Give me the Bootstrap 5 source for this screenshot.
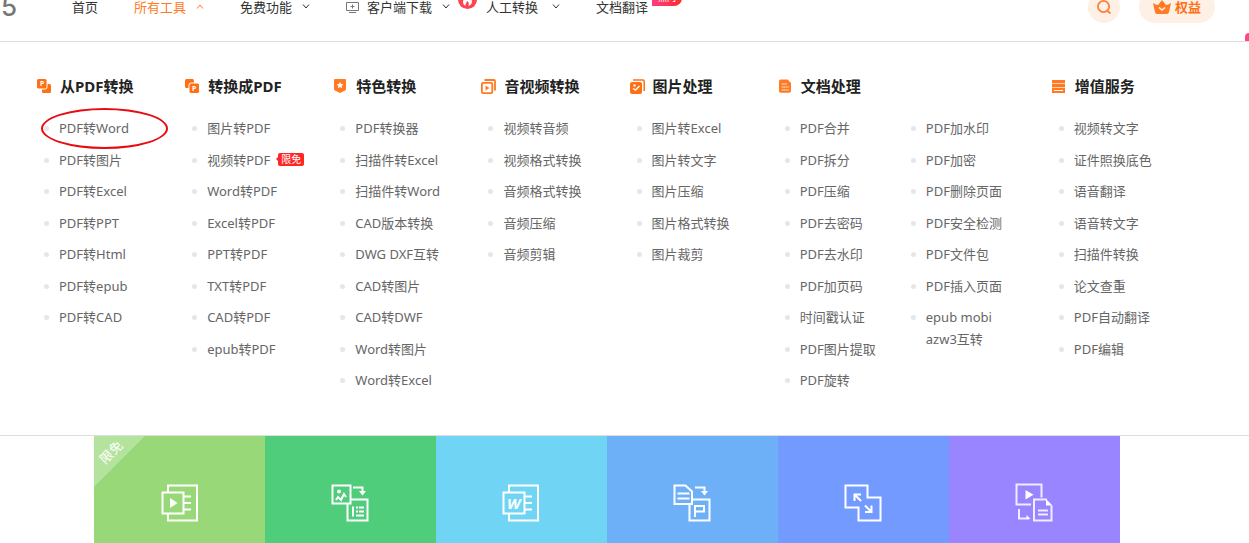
<!DOCTYPE html>
<html lang="zh-CN">
<head>
<meta charset="utf-8">
<meta name="viewport" content="width=device-width, initial-scale=1">
<title>所有工具</title>
<link rel="stylesheet" href="https://cdn.jsdelivr.net/npm/bootstrap@5.3.0/dist/css/bootstrap.min.css">
<style>
  body { font-family: "Noto Sans", "Noto Sans CJK SC", sans-serif; font-size: 13px; line-height: 22px; color: #333; }
  a { color: inherit; text-decoration: none; }
  .site-nav { height: 70px; margin-top: -28px; border-bottom: 1px solid #ddd; padding-right: 34px; }
  .brand { width: 72px; font: 500 26px/32px "Inter", sans-serif; color: #777; }
  .brand a { display: flex; justify-content: flex-end; width: 17px; overflow: hidden; }
  .nav-items { gap: 36px; }
  .nav-items svg { flex: none; }
  .caret { width: 8px; height: 5px; margin-left: 10px; fill: none; stroke: currentColor; stroke-width: 1; }
  .caret-far { margin-left: 14px; }
  .orange { color: #ff7a22; }
  .flame { left: -28px; top: -6px; }
  .hot { left: 100%; top: -6px; margin-left: 4px; padding: 0 6px; font-size: 9px; line-height: 16px; color: #fff; background: linear-gradient(90deg, #ff3d7f, #ff2b2b); border-radius: 8px 8px 8px 0; }
  .find { width: 32px; height: 32px; background: #fff0e6; }
  .vip { width: 76px; height: 32px; background: #fff0e6; color: #ff6f14; margin-left: 19px; gap: 4px; }
  .float-dot { right: 0; bottom: 0; width: 4px; height: 8px; background: #ff4785; border-radius: 4px 0 0 0; }
  .mega { padding: 33px 49px 39px 37px; border-bottom: 1px solid #ddd; display: grid; grid-template-columns: repeat(5, 4fr) 7.4fr 4fr; }
  .mega h2 { font-size: 15px; line-height: 22px; font-weight: 700; color: #222; margin-bottom: 15px; gap: 8px; }
  .mega h2 svg { width: 15px; height: 15px; flex: none; }
  .mega ul { display: grid; grid-template-rows: repeat(9, 1fr); min-height: 284px; padding-left: 22px; margin: 0; list-style: none; color: #666; }
  .mega li { position: relative; padding-top: 5px; white-space: nowrap; }
  .mega li::before { content: ""; position: absolute; left: -15px; top: 14px; width: 5px; height: 5px; border-radius: 50%; background: #e6e6e6; }
  .two-cols { display: grid; grid-template-columns: 126fr 148fr; }
  .mega .tall { grid-row: span 2; white-space: normal; }
  .ring { left: -18px; top: -4px; width: 127px; height: 41px; border: 2px solid #e80c10; border-radius: 50%; pointer-events: none; }
  .free { position: relative; margin-left: 8px; padding: 0 3px; font-size: 10px; line-height: 13px; color: #fff; background: #ff2626; border-radius: 2px; }
  .free::before { content: ""; position: absolute; left: -2px; top: 4px; border: 2px solid transparent; border-left: 0; border-right-color: #ff2626; }
  .tiles { padding: 0 129px 0 94px; }
  .tile { flex: 1 1 0; padding-top: 48px; }
  .tile svg { width: 38px; height: 38px; fill: none; stroke: #fff; stroke-width: 2; overflow: visible; }
  .tile .solid { fill: #fff; stroke: none; }
  .t1 { background: #98d878; } .t2 { background: #4fcd7a; } .t3 { background: #70d5f5; }
  .t4 { background: #6db0f8; } .t5 { background: #729aff; } .t6 { background: #9985ff; }
  .ribbon { left: 0; top: 0; width: 51px; height: 51px; background: rgba(255,255,255,.28); clip-path: polygon(0 0, 100% 0, 0 100%); color: #fff; }
  .ribbon span { position: absolute; left: 4px; top: 5px; transform: rotate(-45deg); }
</style>
</head>
<body class="min-vh-100 d-flex flex-column bg-white overflow-x-hidden">
<header class="site-nav d-flex align-items-center position-relative">
  <div class="brand flex-shrink-0"><a href="#">65</a></div>
  <nav class="nav-items d-flex align-items-center text-nowrap" aria-label="主导航">
    <a href="#">首页</a>
    <a href="#" class="orange d-flex align-items-center">所有工具<svg class="caret" viewBox="0 0 8 5"><path d="M1 4.500 4 1l3 3.500"/></svg></a>
    <a href="#" class="d-flex align-items-center">免费功能<svg class="caret" viewBox="0 0 8 5"><path d="M1 .5 4 4 7 .5"/></svg></a>
    <a href="#" class="d-flex align-items-center"><svg class="me-2" width="13" height="12" viewBox="0 0 13 12" fill="none" stroke="#777"><path d="M.5 1.500h12v8H.5zM3 11.500h7M6.500 3.500v4M4.500 5.500h4"/></svg>客户端下载<svg class="caret" viewBox="0 0 8 5"><path d="M1 .5 4 4 7 .5"/></svg></a>
    <a href="#" class="d-flex align-items-center position-relative"><svg class="flame position-absolute" width="19" height="19" viewBox="0 0 19 19"><circle cx="9.500" cy="9.500" r="9.500" fill="#ff4350"/><path d="M9 3c1 3-4 5-4 9 0 2 1 3 2.500 4-.5-2 1-3 1.500-5 2 1 2 3 1.500 5 2-1 3.500-2 3.500-4.500C14 8 10.500 7 9 3z" fill="#fff"/></svg>人工转换<svg class="caret caret-far" viewBox="0 0 8 5"><path d="M1 .5 4 4 7 .5"/></svg></a>
    <a href="#" class="position-relative">文档翻译<span class="hot position-absolute">热门</span></a>
  </nav>
  <button class="find btn p-0 border-0 rounded-circle ms-auto d-flex align-items-center justify-content-center flex-shrink-0" type="button" aria-label="搜索"><svg width="16" height="16" viewBox="0 0 16 16" fill="none" stroke="#ff7f3b" stroke-width="1.8"><circle cx="7.500" cy="7.500" r="5.600"/><path d="m11 11.500 3.500 3"/></svg></button>
  <a href="#" class="vip rounded-pill d-flex align-items-center justify-content-center fw-bold flex-shrink-0"><svg width="18" height="16" viewBox="0 0 18 16"><path d="M0 4q3 2 5 2l4-5 4 5q2 0 5-2l-2 9q-.4 2-2 2H4q-1.600 0-2-2z" fill="#ff7b24"/><path d="m6 8.500 3 2.500 3-2.500" fill="none" stroke="#fff0e6" stroke-width="1.600"/></svg>权益</a>
  <span class="float-dot position-absolute"></span>
</header>

<section class="mega">
  <div>
    <h2 class="d-flex align-items-center"><svg viewBox="0 0 15 15" fill="#ff6f14"><rect x="5" y="5" width="9" height="9" rx="1.500"/><rect x="-.5" y="-.5" width="10.500" height="10.500" rx="2" stroke="#fff"/><text x="3" y="7" font-size="7" font-weight="700" fill="#fff">P</text></svg>从PDF转换</h2>
    <ul>
      <li><a href="#">PDF转Word</a><span class="ring position-absolute"></span></li>
      <li><a href="#">PDF转图片</a></li>
      <li><a href="#">PDF转Excel</a></li>
      <li><a href="#">PDF转PPT</a></li>
      <li><a href="#">PDF转Html</a></li>
      <li><a href="#">PDF转epub</a></li>
      <li><a href="#">PDF转CAD</a></li>
    </ul>
  </div>
  <div>
    <h2 class="d-flex align-items-center"><svg viewBox="0 0 15 15" fill="#ff6f14"><rect x="0" y="0" width="9" height="9" rx="1.500"/><rect x="4" y="4" width="10.500" height="10.500" rx="2" stroke="#fff"/><text x="7" y="12" font-size="7" font-weight="700" fill="#fff">P</text></svg>转换成PDF</h2>
    <ul>
      <li><a href="#">图片转PDF</a></li>
      <li class="d-flex align-items-start"><a href="#">视频转PDF</a><span class="free mt-1">限免</span></li>
      <li><a href="#">Word转PDF</a></li>
      <li><a href="#">Excel转PDF</a></li>
      <li><a href="#">PPT转PDF</a></li>
      <li><a href="#">TXT转PDF</a></li>
      <li><a href="#">CAD转PDF</a></li>
      <li><a href="#">epub转PDF</a></li>
    </ul>
  </div>
  <div>
    <h2 class="d-flex align-items-center"><svg viewBox="0 0 15 15"><path d="M2 0h10q1 0 1 1v9q0 1-1 1.500L7 14l-5-2.500Q1 11 1 10V1q0-1 1-1z" fill="#ff7a22"/><path d="m7 2.800 1 2.200 2.400.3-1.800 1.600.5 2.400L7 8.100 4.900 9.300l.5-2.400-1.800-1.600L6 5z" fill="#fff"/></svg>特色转换</h2>
    <ul>
      <li><a href="#">PDF转换器</a></li>
      <li><a href="#">扫描件转Excel</a></li>
      <li><a href="#">扫描件转Word</a></li>
      <li><a href="#">CAD版本转换</a></li>
      <li><a href="#">DWG DXF互转</a></li>
      <li><a href="#">CAD转图片</a></li>
      <li><a href="#">CAD转DWF</a></li>
      <li><a href="#">Word转图片</a></li>
      <li><a href="#">Word转Excel</a></li>
    </ul>
  </div>
  <div>
    <h2 class="d-flex align-items-center"><svg viewBox="0 0 15 15" fill="none" stroke="#ff7a22" stroke-width="1.800"><rect x=".9" y="3.800" width="10.400" height="10.300" rx="1"/><path d="M3.500 1h9.500q1 0 1 1v9.500"/><path d="M4.500 6.500v5l4-2.500z" fill="#ff7a22" stroke="none"/></svg>音视频转换</h2>
    <ul>
      <li><a href="#">视频转音频</a></li>
      <li><a href="#">视频格式转换</a></li>
      <li><a href="#">音频格式转换</a></li>
      <li><a href="#">音频压缩</a></li>
      <li><a href="#">音频剪辑</a></li>
    </ul>
  </div>
  <div>
    <h2 class="d-flex align-items-center"><svg viewBox="0 0 15 15"><rect y="3" width="12" height="12" rx="2" fill="#ff6f14"/><path d="M3 1h10q1.200 0 1.200 1.200V12" fill="none" stroke="#ff6f14" stroke-width="1.500"/><circle cx="4.500" cy="6.500" r="1.200" fill="#fff"/><path d="m3 9.500 2.500 1.500 4-4" fill="none" stroke="#fff" stroke-width="1.400"/></svg>图片处理</h2>
    <ul>
      <li><a href="#">图片转Excel</a></li>
      <li><a href="#">图片转文字</a></li>
      <li><a href="#">图片压缩</a></li>
      <li><a href="#">图片格式转换</a></li>
      <li><a href="#">图片裁剪</a></li>
    </ul>
  </div>
  <div>
    <h2 class="d-flex align-items-center"><svg viewBox="0 0 15 15"><path d="M3 .5h6.500L13 4v8q0 1.800-2 1.800H3q-2 0-2-1.800V2.300Q1 .5 3 .5z" fill="#ff7a22"/><path d="M3.500 5H9M3.500 8H11M3.500 11H11" stroke="#ffd9bf" stroke-width="1.200"/></svg>文档处理</h2>
    <div class="two-cols">
      <ul>
        <li><a href="#">PDF合并</a></li>
        <li><a href="#">PDF拆分</a></li>
        <li><a href="#">PDF压缩</a></li>
        <li><a href="#">PDF去密码</a></li>
        <li><a href="#">PDF去水印</a></li>
        <li><a href="#">PDF加页码</a></li>
        <li><a href="#">时间戳认证</a></li>
        <li><a href="#">PDF图片提取</a></li>
        <li><a href="#">PDF旋转</a></li>
      </ul>
      <ul>
        <li><a href="#">PDF加水印</a></li>
        <li><a href="#">PDF加密</a></li>
        <li><a href="#">PDF删除页面</a></li>
        <li><a href="#">PDF安全检测</a></li>
        <li><a href="#">PDF文件包</a></li>
        <li><a href="#">PDF插入页面</a></li>
        <li class="tall"><a href="#">epub mobi<br>azw3互转</a></li>
      </ul>
    </div>
  </div>
  <div>
    <h2 class="d-flex align-items-center"><svg viewBox="0 0 15 15"><path d="M0 1h13v13H0z" fill="#ff7a22"/><path d="M0 4.500h13M0 8.500h13" stroke="#ffd0b0" stroke-width="1.200"/><path d="M2 11.500h9" stroke="#fff"/></svg>增值服务</h2>
    <ul>
      <li><a href="#">视频转文字</a></li>
      <li><a href="#">证件照换底色</a></li>
      <li><a href="#">语音翻译</a></li>
      <li><a href="#">语音转文字</a></li>
      <li><a href="#">扫描件转换</a></li>
      <li><a href="#">论文查重</a></li>
      <li><a href="#">PDF自动翻译</a></li>
      <li><a href="#">PDF编辑</a></li>
    </ul>
  </div>
</section>

<main class="tiles d-flex flex-grow-1">
  <a href="#" class="tile t1 text-center position-relative" aria-label="视频转换"><span class="ribbon position-absolute"><span>限免</span></span>
    <svg viewBox="0 0 38 38"><path d="M7 8V1.500h29v35H7V30M1.500 8.500h21v21h-21zM23 12.500h7M23 19h7M23 25.500h7"/><path class="solid" d="M9 14v10l7.500-5z"/></svg></a>
  <a href="#" class="tile t2 text-center" aria-label="图片转换">
    <svg viewBox="1 0 38 38"><path d="M1.500 1.500h18v18h-18zM19.500 15.500h17v21h-20v-17M5 16l2-3 3 3 3-6 2 3M22 3.500h9.500V8M22 22.500v10M25 23.500h8M25 27.500h8M25 31.500h8"/><path stroke="#4fcd7a" stroke-width="1" d="M27.500 22v7"/><circle class="solid" cx="8" cy="7.500" r="2"/><path class="solid" d="M28 7h7l-3.500 4.500z"/></svg></a>
  <a href="#" class="tile t3 text-center" aria-label="Word转换">
    <svg viewBox="1 0 38 38"><path d="M7 8V1.500h29v35H7V30M1.500 8.500h21v21h-21zM23 12.500h7M23 19h7M23 25.500h7"/><text class="solid" x="5" y="24.500" font-family="Open Sans" font-size="15" font-weight="700" font-style="italic">W</text></svg></a>
  <a href="#" class="tile t4 text-center" aria-label="文档转换">
    <svg viewBox="1 0 38 38"><path d="M1.500 1.500h11l6.500 6V20H1.500zM4.500 9.500h12M4.500 14.500h12M19 15.500h17.500v21h-20V20M22 33V22h9v5.500h-9M22 3.500h9.500V8"/><path class="solid" d="M28 7h7l-3.500 4.500z"/></svg></a>
  <a href="#" class="tile t5 text-center" aria-label="压缩">
    <svg viewBox="1 0 38 38"><path d="M1.500 1.500h22v12h13v23h-22v-13h-13zM10.500 17v-6.500H17M11 11l6 6M27.500 21.500V28H21M27 27.500l-6-6"/></svg></a>
  <a href="#" class="tile t6 text-center" aria-label="视频转文字">
    <svg viewBox="1 0 38 38"><path stroke-opacity=".85" d="M26.500 13.500V.5h-25v20H16M32 15.500H19v21h17.500V21.500M23 26.500h10M23 30.500h10M4 25v9.500h10"/><path class="solid" d="M10.500 6v9.500l8-4.700zM31 15l6.500 6.500H31zM11.500 31l4 4h-4z"/></svg></a>
</main>
<script src="https://cdn.jsdelivr.net/npm/bootstrap@5.3.0/dist/js/bootstrap.bundle.min.js"></script>
</body>
</html>
